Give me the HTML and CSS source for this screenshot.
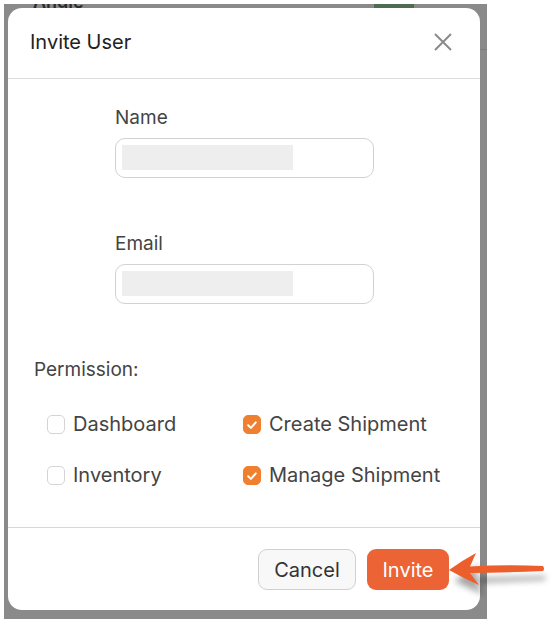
FILE: index.html
```html
<!DOCTYPE html>
<html>
<head>
<meta charset="utf-8">
<link rel="stylesheet" href="styles.css">
</head>
<body>
<div class="backdrop">
  <div class="bg-peek">
    <span class="bg-name">Angie</span>
    <span class="bg-badge"></span>
  </div>
  <span class="bg-line"></span>
  <div class="modal">
    <div class="modal-header">
      <h1 class="title">Invite User</h1>
      <svg class="close" width="20" height="20" viewBox="0 0 20 20"><path d="M2 2 L18 18 M18 2 L2 18" stroke="#8a8a8a" stroke-width="2" fill="none"/></svg>
    </div>
    <div class="modal-body">
      <div class="field">
        <label class="label">Name</label>
        <div class="input"><span class="fill"></span></div>
      </div>
      <div class="field field-email">
        <label class="label">Email</label>
        <div class="input"><span class="fill"></span></div>
      </div>
      <div class="perm-title">Permission:</div>
      <div class="perms">
        <div class="check"><span class="box"></span>Dashboard</div>
        <div class="check"><span class="box on"><svg width="12" height="12" viewBox="0 0 12 12"><path d="M2.2 6.3 L4.9 8.9 L9.8 3.4" stroke="#fff" stroke-width="2" fill="none" stroke-linecap="round" stroke-linejoin="round"/></svg></span>Create Shipment</div>
        <div class="check"><span class="box"></span>Inventory</div>
        <div class="check"><span class="box on"><svg width="12" height="12" viewBox="0 0 12 12"><path d="M2.2 6.3 L4.9 8.9 L9.8 3.4" stroke="#fff" stroke-width="2" fill="none" stroke-linecap="round" stroke-linejoin="round"/></svg></span>Manage Shipment</div>
      </div>
    </div>
    <div class="modal-footer">
      <button class="btn btn-cancel">Cancel</button>
      <button class="btn btn-invite">Invite</button>
    </div>
  </div>
</div>
<svg class="arrow" width="110" height="50" viewBox="0 0 110 50">
  <defs>
    <filter id="sh" x="-20%" y="-50%" width="140%" height="220%">
      <feGaussianBlur stdDeviation="3"/>
    </filter>
  </defs>
  <path d="M6 28 L32 11 L27 25 L98 23 L97 27 L28 30 L36 42 Z" fill="#000" opacity="0.35" filter="url(#sh)" transform="translate(2,5)"/>
  <path d="M3 22 Q17 12 30 5 L24 18.5 Q60 16.5 97 18 Q99 21 97 23 Q60 24.5 24 25 L33 37 Q17 30 3 22 Z" fill="#EC5E2C"/>
</svg>
</body>
</html>
```
FILE: styles.css
```css
* { box-sizing: border-box; }
html, body { margin: 0; padding: 0; background: #fff; }
body {
  width: 552px;
  height: 626px;
  position: relative;
  font-family: Inter, "Noto Sans", sans-serif;
  color: #333;
  overflow: hidden;
}
.backdrop {
  position: absolute;
  left: 4px;
  top: 4px;
  width: 483px;
  height: 615px;
  background: #8a8a8a;
  padding: 4px 7px 9px 4px;
}
.bg-peek {
  position: absolute;
  left: 0; top: 0; right: 0;
  height: 4px;
  overflow: hidden;
}
.bg-name {
  position: absolute;
  left: 29px;
  top: -13px;
  font-size: 18px;
  font-weight: 600;
  color: #2a2a2a;
}
.bg-badge {
  position: absolute;
  left: 370px;
  top: 0;
  width: 40px;
  height: 4px;
  background: #4f6b52;
}
.bg-line {
  position: absolute;
  right: 0;
  top: 45px;
  width: 10px;
  height: 1px;
  background: #7a7a7a;
}
.modal {
  position: relative;
  width: 472px;
  height: 602px;
  background: #fff;
  border-radius: 14px;
  display: flex;
  flex-direction: column;
}
.modal-header {
  height: 71px;
  display: flex;
  align-items: center;
  justify-content: space-between;
  padding: 0 27px 2px 22px;
  border-bottom: 1px solid #dcdcdc;
}
.title {
  margin: 0;
  font-size: 20px;
  font-weight: 400;
  color: #222;
}
.close { display: block; }
.modal-body {
  flex: 1;
  padding: 27px 0 0 0;
}
.field {
  margin-left: 107px;
  display: flex;
  flex-direction: column;
  gap: 9px;
}
.field-email { margin-top: 54px; }
.label {
  font-size: 19px;
  line-height: 23px;
  color: #444;
}
.input {
  width: 259px;
  height: 40px;
  border: 1px solid #d2d2d2;
  border-radius: 10px;
  padding: 6px 0 0 6px;
}
.fill {
  display: block;
  width: 171px;
  height: 25px;
  background: #eeeeee;
}
.perm-title {
  margin: 54px 0 0 26px;
  font-size: 19px;
  line-height: 23px;
  color: #444;
}
.perms {
  margin: 32px 0 0 39px;
  display: grid;
  grid-template-columns: 196px auto;
  row-gap: 28px;
}
.check {
  display: flex;
  align-items: center;
  gap: 8px;
  font-size: 20px;
  line-height: 23px;
  color: #444;
}
.box {
  width: 18px;
  height: 19px;
  border: 1px solid #d4d4d4;
  border-radius: 5px;
  display: flex;
  align-items: center;
  justify-content: center;
}
.box.on {
  background: #F0802F;
  border-color: #F0802F;
}
.box svg { display: block; }
.modal-footer {
  border-top: 1px solid #d8d8d8;
  height: 83px;
  display: flex;
  justify-content: flex-end;
  align-items: flex-start;
  gap: 11px;
  padding: 21px 31px 0 0;
}
.btn {
  height: 41px;
  border-radius: 9px;
  font-family: Inter, "Noto Sans", sans-serif;
  font-size: 20px;
  padding: 0;
  cursor: pointer;
}
.btn-cancel {
  width: 98px;
  background: #f8f8f8;
  border: 1px solid #d0d0d0;
  color: #333;
}
.btn-invite {
  width: 82px;
  background: #EC6336;
  border: none;
  color: #fff;
}
.arrow {
  position: absolute;
  left: 446px;
  top: 548px;
}
```
